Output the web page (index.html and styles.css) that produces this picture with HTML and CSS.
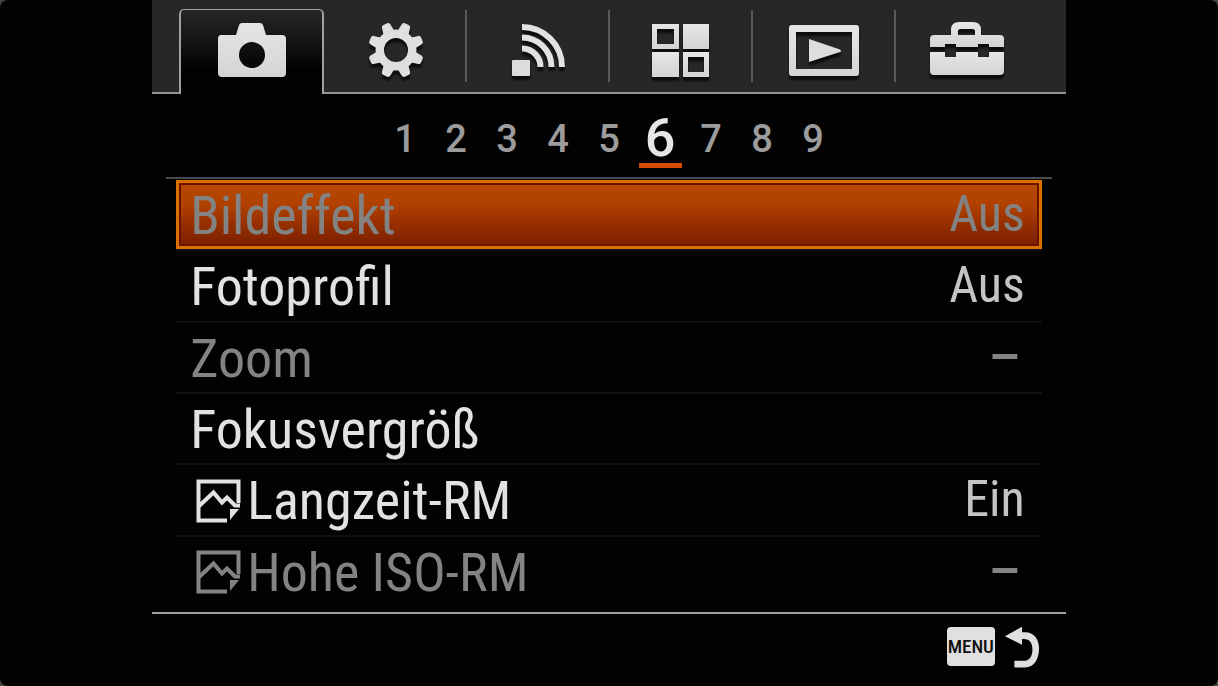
FILE: index.html
```html
<!DOCTYPE html>
<html lang="de">
<head>
<meta charset="utf-8">
<meta name="viewport" content="width=device-width, initial-scale=1">
<title>Kameramenü</title>
<link rel="stylesheet" href="styles.css">
</head>
<body>
<svg class="defs" width="0" height="0" aria-hidden="true">
  <defs>
    <linearGradient id="metal" x1="0" y1="0" x2="0" y2="1">
      <stop offset="0" stop-color="#e6e6e6"/>
      <stop offset="1" stop-color="#d4d4d4"/>
    </linearGradient>
    <symbol id="still" viewBox="0 0 46 46">
      <path d="M32 42.500H3.500V3.500H43.500V25" fill="none" stroke="currentColor" stroke-width="4"/>
      <path d="M3 29L18.500 14.500L27 24.500L32 19.500L40 27.500H45" fill="none" stroke="currentColor" stroke-width="4"/>
      <path d="M35 31H44L35 42Z" fill="currentColor"/>
    </symbol>
    <path id="tooth" d="M34 15L35.500 6Q36 4 38 4H42Q44 4 44.500 6L46 15Z"/>
  </defs>
</svg>
<div class="menu">
  <nav class="tabs" aria-label="Menügruppen">
    <button class="tab tab-active" aria-label="Kamera">
      <svg class="tab-icon" viewBox="0 0 80 64"><path fill="url(#metal)" fill-rule="evenodd" d="M9 15H24L27 5Q28 3 30 3H48Q50 3 51 5L54 15H70Q74 15 74 19V53Q74 57 70 57H10Q6 57 6 53V19Q6 15 9 15ZM40 22A13 13 0 1 0 40 48A13 13 0 1 0 40 22Z"/></svg>
    </button>
    <button class="tab" aria-label="Einstellungen">
      <svg class="tab-icon shadowed" viewBox="0 0 80 64">
        <g fill="#dfdfdf">
          <path fill-rule="evenodd" d="M40 10.500A20.500 20.500 0 1 0 40 51.500A20.500 20.500 0 1 0 40 10.500ZM40 19A12 12 0 1 1 40 43A12 12 0 1 1 40 19Z"/>
          <g transform="translate(0 -1)">
            <use href="#tooth" transform="rotate(22.500 40 32)"/>
            <use href="#tooth" transform="rotate(67.500 40 32)"/>
            <use href="#tooth" transform="rotate(112.500 40 32)"/>
            <use href="#tooth" transform="rotate(157.500 40 32)"/>
            <use href="#tooth" transform="rotate(202.500 40 32)"/>
            <use href="#tooth" transform="rotate(247.500 40 32)"/>
            <use href="#tooth" transform="rotate(292.500 40 32)"/>
            <use href="#tooth" transform="rotate(337.500 40 32)"/>
          </g>
        </g>
      </svg>
    </button>
    <button class="tab" aria-label="Drahtlos">
      <svg class="tab-icon shadowed" viewBox="0 0 80 64">
        <rect x="13" y="41" width="18" height="16" rx="1" fill="#dcdcdc"/>
        <g fill="none" stroke="#e2e2e2" stroke-width="6">
          <path d="M23 8A40 40 0 0 1 63 48"/>
          <path d="M23 18.500A29.500 29.500 0 0 1 52.500 48"/>
          <path d="M23 29.500A18.500 18.500 0 0 1 41.500 48"/>
        </g>
      </svg>
    </button>
    <button class="tab" aria-label="Applikation">
      <svg class="tab-icon shadowed" viewBox="0 0 80 64">
        <g fill="url(#metal)" fill-rule="evenodd">
          <path d="M11 5H38V30H11ZM16 10V25H33V10Z"/>
          <path d="M42 5H68V30H42Z"/>
          <path d="M11 33H38V58H11Z"/>
          <path d="M42 33H68V58H42ZM47 38V53H63V38Z"/>
        </g>
      </svg>
    </button>
    <button class="tab" aria-label="Wiedergabe">
      <svg class="tab-icon shadowed" viewBox="0 0 80 64">
        <path fill="url(#metal)" fill-rule="evenodd" d="M8 6H72Q75 6 75 9V54Q75 57 72 57H8Q5 57 5 54V9Q5 6 8 6ZM12 13V50H68V13Z"/>
        <path fill="#dedede" d="M25 20L56 30.500Q58 32 56 33L25 43Z"/>
      </svg>
    </button>
    <button class="tab" aria-label="Setup">
      <svg class="tab-icon shadowed" viewBox="0 0 80 64">
        <path fill="url(#metal)" fill-rule="evenodd" d="M3 28V20Q3 16 7 16H24V11Q24 3 32 3H46Q54 3 54 11V16H73Q77 16 77 20V28H62V25H51V28H29V25H18V28ZM31 16H48V12Q48 10 45 10H34Q31 10 31 12Z"/>
        <path fill="url(#metal)" d="M3 33H18V38H29V33H51V38H62V33H77V52Q77 56 73 56H7Q3 56 3 52Z"/>
      </svg>
    </button>
  </nav>

  <nav class="pages" aria-label="Seiten">
    <button class="page">1</button>
    <button class="page">2</button>
    <button class="page">3</button>
    <button class="page">4</button>
    <button class="page">5</button>
    <button class="page page-current" aria-current="page">6</button>
    <button class="page">7</button>
    <button class="page">8</button>
    <button class="page">9</button>
  </nav>

  <ul class="items">
    <li class="item"><button class="row row-selected row-dim"><span class="label">Bildeffekt</span><span class="value">Aus</span></button></li>
    <li class="item"><button class="row"><span class="label">Fotoprofil</span><span class="value">Aus</span></button></li>
    <li class="item"><button class="row row-dim"><span class="label">Zoom</span><span class="value value-none">–</span></button></li>
    <li class="item"><button class="row"><span class="label">Fokusvergröß</span></button></li>
    <li class="item"><button class="row"><span class="label"><svg class="still"><use href="#still"/></svg>Langzeit-RM</span><span class="value">Ein</span></button></li>
    <li class="item"><button class="row row-dim"><span class="label"><svg class="still"><use href="#still"/></svg>Hohe ISO-RM</span><span class="value value-none">–</span></button></li>
  </ul>

  <footer class="footer">
    <button class="back" aria-label="MENU zurück">
      <span class="badge">MENU</span>
      <svg class="arrow" viewBox="0 0 38 44"><path d="M1 10L19 0V6H22C32 6 37 14 37 23C37 34 32 43 22 43H11V36H21C27 36 30 31 30 24C30 17 27 13 21 13H19V19Z" fill="#e0e0e0"/></svg>
    </button>
  </footer>
</div>
</body>
</html>
```
FILE: styles.css
```css
* {
  box-sizing: border-box;
}

html {
  background: #444;
}

body {
  display: flex;
  justify-content: center;
  min-height: 100vh;
  margin: 0;
  border-radius: 8px;
  background: #020202;
  color: #e2e2e2;
  font-family: "Roboto Condensed", "Liberation Sans Narrow", "Arial Narrow", Roboto, sans-serif;
}

button {
  margin: 0;
  padding: 0;
  border: 0;
  background: none;
  color: inherit;
  font: inherit;
  cursor: pointer;
}

.defs {
  position: absolute;
}

.menu {
  display: flex;
  flex-direction: column;
  width: 75%;
}

.tabs {
  display: grid;
  grid-template-columns: 27px 145px repeat(5, 1fr) 27px;
  height: 94px;
  background: #272727;
}

.tabs::before,
.tabs::after {
  content: "";
  border-bottom: 2px solid #929292;
}

.tab {
  display: flex;
  justify-content: center;
  padding-top: 19px;
  border-bottom: 2px solid #929292;
  background: linear-gradient(#5a5a5a, #5a5a5a) right 10px / 2px 72px no-repeat;
}

.tab:last-child {
  background: none;
}

.tab-active {
  margin-top: 9px;
  padding-top: 10px;
  border: 2px solid #a0a0a0;
  border-top-width: 1px;
  border-bottom: 0;
  border-radius: 5px 5px 0 0;
  background: linear-gradient(#272727, #020202 60px);
}

.tab-icon {
  width: 80px;
  height: 64px;
}

.shadowed {
  filter: drop-shadow(0 4px 1px #0c0c0c);
}

.pages {
  display: grid;
  grid-template-columns: repeat(9, 43px);
  justify-content: center;
  column-gap: 8px;
  height: 83px;
  padding-top: 16px;
}

.page {
  height: 58px;
  color: #9c9c9c;
  font-family: Roboto, sans-serif;
  font-size: 38px;
  font-weight: 500;
  line-height: 58px;
}

.page-current {
  border-bottom: 5px solid #d44a00;
  color: #e6e6e6;
  font-size: 54px;
  line-height: 56px;
}

.items {
  display: grid;
  flex: 1;
  grid-auto-rows: 1fr;
  margin: 0 14px;
  padding: 1px 10px 4px;
  border-top: 2px solid #4a4a4a;
  list-style: none;
}

.item {
  border-bottom: 2px solid #101010;
}

.item:last-child {
  border-bottom: 0;
}

.row {
  display: flex;
  justify-content: space-between;
  width: 100%;
  height: 69px;
  padding: 0 17px 0 14px;
  line-height: 69px;
}

.row-selected {
  padding: 0 14px 0 11px;
  border: 3px solid #d97000;
  background: linear-gradient(#b84a00, #b04000 35%, #8a2800 80%, #7c2000);
  box-shadow: inset 0 0 0 2px #6a1400;
  line-height: 63px;
}

.label {
  display: flex;
  align-items: center;
  padding-top: 2px;
  font-size: 54px;
  white-space: pre;
}

.value {
  color: #c4c4c4;
  font-size: 50px;
}

.row-dim,
.row-dim .value {
  color: #838383;
}

.value-none {
  padding-right: 6px;
  font-family: "Liberation Sans", sans-serif;
  font-weight: 700;
  line-height: 60px;
}

.still {
  width: 46px;
  height: 46px;
  margin: 0 6px 0 5px;
}

.footer {
  display: flex;
  justify-content: flex-end;
  height: 74px;
  padding: 12px 26px 0 0;
  border-top: 2px solid #a0a0a0;
}

.back {
  display: flex;
  align-items: flex-start;
  gap: 9px;
}

.badge {
  width: 48px;
  height: 39px;
  margin-top: 1px;
  border-radius: 4px;
  background: #e0e0e0;
  color: #101010;
  font-size: 19px;
  font-weight: 500;
  line-height: 39px;
  text-align: center;
}

.arrow {
  width: 36px;
  height: 43px;
}
```
